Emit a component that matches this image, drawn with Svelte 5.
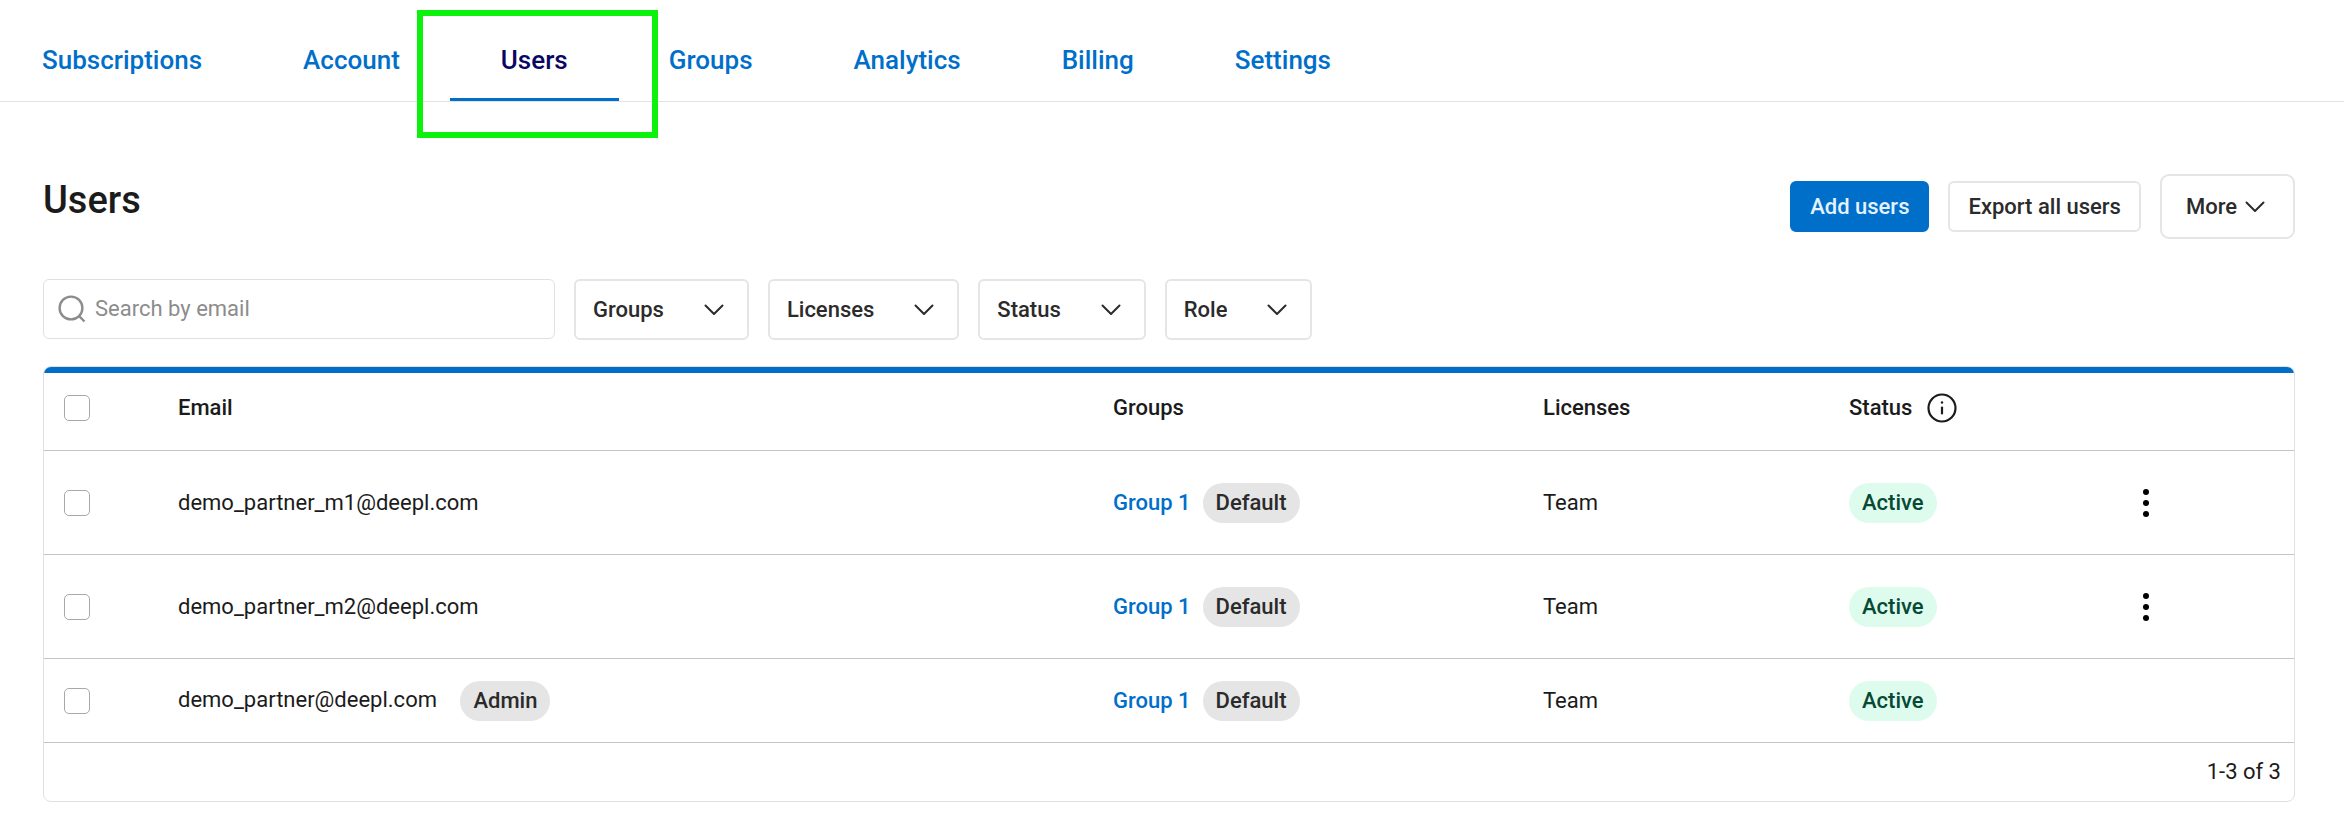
<script lang="ts">
	interface User {
		email: string;
		role?: string;
		group: string;
		license: string;
		status: string;
		hasMenu: boolean;
	}

	const tabs = ['Subscriptions', 'Account', 'Users', 'Groups', 'Analytics', 'Billing', 'Settings'];

	const filters = [
		{ label: 'Groups', options: ['Group 1'] },
		{ label: 'Licenses', options: ['Team'] },
		{ label: 'Status', options: ['Active'] },
		{ label: 'Role', options: ['Admin'] }
	];

	const users: User[] = [
		{ email: 'demo_partner_m1@deepl.com', group: 'Group 1', license: 'Team', status: 'Active', hasMenu: true },
		{ email: 'demo_partner_m2@deepl.com', group: 'Group 1', license: 'Team', status: 'Active', hasMenu: true },
		{ email: 'demo_partner@deepl.com', role: 'Admin', group: 'Group 1', license: 'Team', status: 'Active', hasMenu: false }
	];

	let activeTab = $state('Users');
	let search = $state('');
	let selected = $state<string[]>([]);

	let visibleUsers = $derived(users.filter((u) => u.email.includes(search.trim())));
	let allSelected = $derived(visibleUsers.length > 0 && selected.length === visibleUsers.length);

	function toggleAll() {
		selected = allSelected ? [] : visibleUsers.map((u) => u.email);
	}
</script>

{#snippet chevron()}
	<svg class="chevron" width="20" height="12" viewBox="0 0 20 12" fill="none" stroke="currentColor" stroke-width="2" stroke-linecap="round" stroke-linejoin="round" aria-hidden="true"><path d="M1.5 1.5 10 10 18.5 1.5" /></svg>
{/snippet}

<nav class="tabs" aria-label="Account">
	<ul>
		{#each tabs as tab}
			<li class:active={tab === activeTab}>
				<a href="#{tab.toLowerCase()}" onclick={() => (activeTab = tab)}>{tab}</a>
			</li>
		{/each}
	</ul>
</nav>

<main>
	<div class="page-head">
		<h1>Users</h1>
		<div class="actions">
			<button type="button" class="btn primary">Add users</button>
			<button type="button" class="btn">Export all users</button>
			<button type="button" class="btn large">More {@render chevron()}</button>
		</div>
	</div>

	<div class="filters">
		<label class="search">
			<svg width="28" height="28" viewBox="0 0 28 28" fill="none" stroke="currentColor" stroke-width="2.4" aria-hidden="true"><circle cx="13" cy="13" r="11.4" /><path d="m20.5 20.5 6 6" /></svg>
			<input type="text" placeholder="Search by email" aria-label="Search by email" bind:value={search} />
		</label>
		{#each filters as filter}
			<div class="select">
				<select aria-label={filter.label}>
					<option>{filter.label}</option>
					{#each filter.options as option}
						<option>{option}</option>
					{/each}
				</select>
				{@render chevron()}
			</div>
		{/each}
	</div>

	<div class="table-card">
		<table>
			<colgroup>
				<col class="col-check" />
				<col />
				<col class="col-groups" />
				<col class="col-licenses" />
				<col class="col-status" />
				<col class="col-menu" />
			</colgroup>
			<thead>
				<tr>
					<th class="check"><input type="checkbox" aria-label="Select all users" checked={allSelected} onchange={toggleAll} /></th>
					<th>Email</th>
					<th>Groups</th>
					<th>Licenses</th>
					<th>
						<span class="with-icon">
							Status
							<svg width="30" height="30" viewBox="0 0 30 30" fill="none" stroke="currentColor" stroke-width="2.2" aria-hidden="true"><circle cx="15" cy="15" r="13.5" /><path d="M15 14.5v6" stroke-linecap="round" /><circle cx="15" cy="9.5" r="1.2" fill="currentColor" stroke="none" /></svg>
						</span>
					</th>
					<th></th>
				</tr>
			</thead>
			<tbody>
				{#each visibleUsers as user (user.email)}
					<tr class:compact={!user.hasMenu}>
						<td class="check"><input type="checkbox" aria-label="Select {user.email}" value={user.email} bind:group={selected} /></td>
						<td>
							<span class="email">{user.email}</span>
							{#if user.role}<span class="badge role">{user.role}</span>{/if}
						</td>
						<td><a href="#group-1">{user.group}</a><span class="badge default">Default</span></td>
						<td>{user.license}</td>
						<td><span class="badge success">{user.status}</span></td>
						<td>
							{#if user.hasMenu}
								<button type="button" class="menu-btn" aria-label="Actions for {user.email}">
									<svg width="8" height="30" viewBox="0 0 8 30" fill="currentColor" aria-hidden="true"><circle cx="4" cy="4" r="3" /><circle cx="4" cy="15" r="3" /><circle cx="4" cy="26" r="3" /></svg>
								</button>
							{/if}
						</td>
					</tr>
				{/each}
			</tbody>
		</table>
		<div class="pagination">1-{visibleUsers.length} of {users.length}</div>
	</div>
</main>

<style>
	:global(body) {
		background: #fff;
		color: #1b1b1b;
		font-family: Roboto, 'Liberation Sans', sans-serif;
		font-size: 22px;
		line-height: 32px;
	}

	.tabs {
		border-bottom: 1px solid #e3e3e3;
	}

	.tabs ul {
		display: flex;
		gap: 101px;
		margin: 0;
		padding: 0 42px;
		list-style: none;
	}

	.tabs li {
		position: relative;
	}

	.tabs a {
		display: block;
		padding: 44px 0 25px;
		font-size: 26px;
		font-weight: 500;
	}

	a {
		color: #006fca;
		font-weight: 500;
		text-decoration: none;
	}

	.tabs .active a {
		color: #0a0764;
	}

	.tabs .active a::after {
		content: '';
		position: absolute;
		inset: auto -51px 0;
		height: 3px;
		background: #006fca;
	}

	/* highlight frame around the current tab */
	.tabs .active::after {
		content: '';
		position: absolute;
		inset: 10px -90px -37px -84px;
		border: 6px solid #0cf20c;
		pointer-events: none;
	}

	main {
		padding: 72px 49px 38px 43px;
	}

	.page-head {
		display: flex;
		justify-content: space-between;
		margin-bottom: 40px;
	}

	h1 {
		margin: 0;
		font-size: 38px;
		font-weight: 500;
		line-height: 52px;
	}

	.actions {
		display: flex;
		align-items: center;
		gap: 19px;
	}

	.btn {
		display: flex;
		align-items: center;
		gap: 8px;
		height: 51px;
		padding: 0 18px;
		border: 2px solid #e5e5e5;
		border-radius: 6px;
		background: #fff;
		color: #2b2b2b;
		font: inherit;
		font-weight: 500;
		cursor: pointer;
	}

	.btn.primary {
		border-color: #006fca;
		background: #006fca;
		color: #e5f2ff;
	}

	.btn.large {
		height: 65px;
		padding: 0 28px 0 24px;
		border-radius: 9px;
	}

	.filters {
		display: flex;
		align-items: flex-start;
		gap: 19px;
		margin-bottom: 26px;
	}

	.search {
		display: flex;
		align-items: center;
		gap: 9px;
		box-sizing: border-box;
		width: 512px;
		height: 60px;
		padding: 0 14px;
		border: 1px solid #e0e0e0;
		border-radius: 6px;
		color: #8c8c8c;
	}

	.search input {
		flex: 1;
		min-width: 0;
		padding: 0;
		border: 0;
		outline: none;
		background: none;
		color: #1b1b1b;
		font: inherit;
	}

	.search input::placeholder {
		color: #8c8c8c;
		opacity: 1;
	}

	.select {
		position: relative;
		color: #2b2b2b;
	}

	.select select {
		appearance: none;
		field-sizing: content;
		height: 61px;
		padding: 1px 83px 0 17px;
		border: 2px solid #e5e5e5;
		border-radius: 6px;
		background: #fff;
		color: inherit;
		font: inherit;
		font-weight: 500;
		cursor: pointer;
	}

	.select .chevron {
		position: absolute;
		top: 25px;
		right: 25px;
		pointer-events: none;
	}

	.table-card {
		overflow: hidden;
		border: 1px solid #e0e0e0;
		border-radius: 8px;
	}

	table {
		width: 100%;
		border-top: 6px solid #006fca;
		border-spacing: 0;
		table-layout: fixed;
	}

	.col-check {
		width: 134px;
	}

	.col-groups {
		width: 430px;
	}

	.col-licenses {
		width: 306px;
	}

	.col-status {
		width: 287px;
	}

	.col-menu {
		width: 158px;
	}

	th,
	td {
		height: 104px;
		padding: 0;
		border-bottom: 1px solid #c4c4c4;
		box-sizing: border-box;
		text-align: left;
	}

	th {
		height: 78px;
		padding-bottom: 8px;
		font-weight: 500;
	}

	.compact td {
		height: 84px;
	}

	.check {
		padding-left: 20px;
	}

	.check input {
		display: block;
		appearance: none;
		width: 26px;
		height: 26px;
		margin: 0;
		border: 1px solid #a8a8a8;
		border-radius: 5px;
		background: #fff;
	}

	.check input:checked {
		border-color: #006fca;
		background: #006fca;
	}

	.with-icon {
		display: flex;
		align-items: center;
		gap: 15px;
	}

	.badge {
		display: inline-block;
		padding: 0 13px;
		border-radius: 20px;
		background: #e5e5e5;
		color: #2b2b2b;
		font-weight: 500;
		line-height: 40px;
	}

	.badge.role {
		margin-left: 18px;
		vertical-align: middle;
	}

	.badge.default {
		margin-left: 12px;
	}

	.badge.success {
		background: #defcee;
		color: #064a35;
	}

	.menu-btn {
		display: flex;
		padding: 8px 6px;
		border: 0;
		background: none;
		color: #000;
		cursor: pointer;
	}

	.pagination {
		padding: 13px 13px 13px 0;
		text-align: right;
	}
</style>
